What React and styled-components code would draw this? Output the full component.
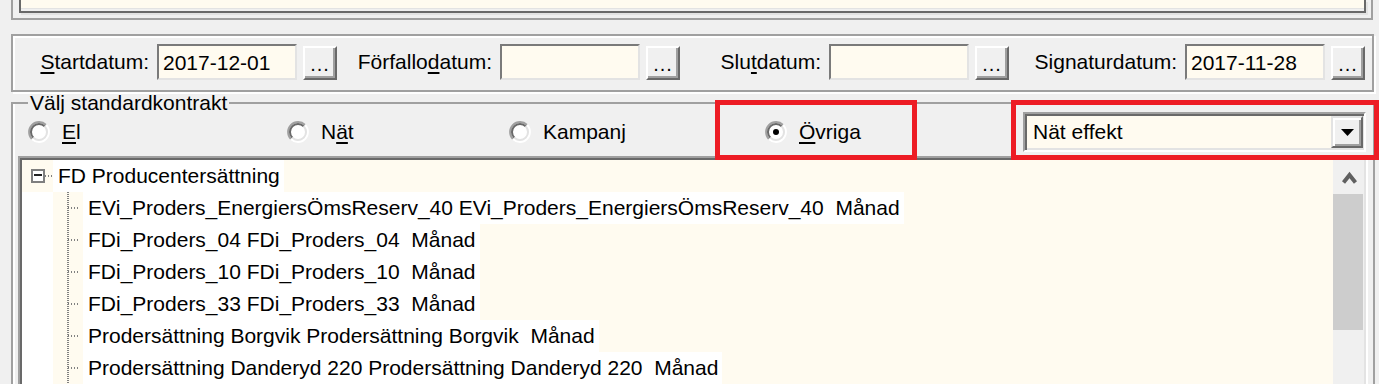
import React from 'react';
import styled, { createGlobalStyle } from 'styled-components';

const Colors = {
  face: '#f0f0f0',
  cream: '#fffbf0',
  shadow: '#a0a0a0',
  dark: '#696969',
  light: '#e3e3e3',
  thumb: '#cdcdcd',
  red: '#ed1c24',
};

const GlobalStyle = createGlobalStyle`
  html, body {
    margin: 0;
    padding: 0;
    background: ${Colors.face};
  }
  body {
    font-family: "Liberation Sans", Arial, sans-serif;
    font-size: 21px;
    color: #000;
  }
  u {
    text-decoration-thickness: 2px;
    text-underline-offset: 3px;
  }
`;

const Page = styled.div`
  position: relative;
  width: 1379px;
  height: 384px;
  overflow: hidden;
  background: ${Colors.face};
`;

// memo field cut off at the top of the window
const TopFrame = styled.div`
  box-sizing: border-box;
  height: 20px;
  margin: 0 6px 0 11px;
  padding: 0 5px 5px 6px;
  border: 2px solid ${Colors.shadow};
  border-top: none;
`;

const Memo = styled.div`
  box-sizing: border-box;
  height: 13px;
  background: ${Colors.cream};
  border: 2px solid ${Colors.dark};
  border-top: none;
  box-shadow: inset 0 -2px 0 ${Colors.face}, inset 0 -3px 0 ${Colors.light}, 2px 2px 0 ${Colors.light};
`;

const DateGroup = styled.div`
  box-sizing: border-box;
  height: 58px;
  margin: 14px 5px 0 11px;
  padding-bottom: 2px;
  display: flex;
  align-items: center;
  border: 2px solid ${Colors.shadow};
  box-shadow: inset 2px 2px 0 #fff, 2px 2px 0 #fff;
`;

const Field = styled.div`
  display: flex;
  align-items: center;
`;

const FieldLabel = styled.label`
  width: ${p => p.$width}px;
  margin-right: 8px;
  text-align: right;
  white-space: nowrap;
  line-height: 30px;
`;

const DateInput = styled.div`
  box-sizing: border-box;
  width: 140px;
  height: 36px;
  padding-left: 4px;
  border: 2px solid;
  border-color: #7a7a7a ${Colors.light} ${Colors.light} #7a7a7a;
  background: ${Colors.cream};
  line-height: 34px;
  font-size: 21px;
`;

const DotsButton = styled.div`
  box-sizing: border-box;
  width: 34px;
  height: 34px;
  margin-left: 6px;
  align-self: flex-end;
  display: flex;
  justify-content: center;
  align-items: flex-end;
  padding-bottom: 5px;
  border: 2px solid;
  border-color: #fff ${Colors.dark} ${Colors.dark} #fff;
  box-shadow: inset -2px -2px 0 ${Colors.shadow};
  background: ${Colors.face};
  font-size: 20px;
  line-height: 18px;
  letter-spacing: 1px;
`;

const ContractGroup = styled.fieldset`
  margin: 1px 4px 0 11px;
  padding: 0;
  min-width: 0;
  height: 320px;
  border: 2px solid ${Colors.shadow};
  border-bottom: none;
  box-shadow: inset 2px 0 0 #fff;
`;

const Legend = styled.legend`
  margin-left: 15px;
  padding: 0 2px;
  line-height: 20px;
`;

const RadioRow = styled.div`
  height: 40px;
  margin-top: -1px;
  padding-left: 15px;
  display: flex;
  align-items: center;
`;

const RadioItem = styled.div`
  width: ${p => p.$width}px;
  display: flex;
  align-items: center;
  gap: 12px;
  flex-shrink: 0;
`;

const Combo = styled.div`
  box-sizing: border-box;
  width: 343px;
  height: 40px;
  margin-left: 8px;
  padding: 0 1px 0 6px;
  display: flex;
  align-items: center;
  border: 2px solid;
  border-color: ${Colors.shadow} #fff #fff ${Colors.shadow};
  box-shadow: inset 2px 2px 0 ${Colors.dark}, inset -2px -2px 0 ${Colors.light};
  background: ${Colors.cream};
  flex-shrink: 0;
`;

const ComboText = styled.span`
  padding-left: 2px;
  flex: 1;
`;

const DropButton = styled.div`
  box-sizing: border-box;
  width: 32px;
  height: 32px;
  display: flex;
  align-items: center;
  justify-content: center;
  border: 2px solid;
  border-color: ${Colors.light} ${Colors.dark} ${Colors.dark} ${Colors.light};
  box-shadow: inset 2px 2px 0 #fff, inset -2px -2px 0 ${Colors.shadow};
  background: ${Colors.face};
`;

const TreeFrame = styled.div`
  margin: 4px 5px 0 5px;
  height: 240px;
  border: 2px solid;
  border-color: ${Colors.shadow} #fff #fff ${Colors.shadow};
`;

const TreeInner = styled.div`
  box-sizing: border-box;
  height: 100%;
  display: flex;
  border: 2px solid;
  border-color: ${Colors.dark} ${Colors.light} ${Colors.light} ${Colors.dark};
  background: ${Colors.cream};
`;

const TreeBody = styled.div`
  flex: 1;
  min-width: 0;
`;

const Row = styled.div`
  height: 32px;
  display: flex;
  align-items: stretch;
`;

const Gutter = styled.div`
  width: 31px;
  flex-shrink: 0;
  display: flex;
  align-items: center;
  background: ${p => (p.$white ? '#fff' : Colors.cream)};
`;

const ExpandBox = styled.span`
  position: relative;
  box-sizing: border-box;
  width: 14px;
  height: 14px;
  margin-left: 9px;
  border: 2px solid #7f7f7f;
  background: #fff;
  &::after {
    content: '';
    position: absolute;
    left: 1px;
    right: 1px;
    top: 3px;
    height: 2px;
    background: #222;
  }
`;

const HDots = styled.span`
  width: ${p => p.$width}px;
  height: 2px;
  background: repeating-linear-gradient(to right, #808080 0 1px, transparent 1px 3px);
`;

const Branch = styled.div`
  width: 30px;
  flex-shrink: 0;
  display: flex;
  align-items: center;
  padding-left: 15px;
  box-sizing: border-box;
  background:
    repeating-linear-gradient(to bottom, #808080 0 1px, transparent 1px 2px) 14px 0 / 2px 100% no-repeat,
    ${Colors.cream};
`;

const NodeLabel = styled.span`
  padding: 0 4px 0 5px;
  background: #fff;
  white-space: pre;
  line-height: 32px;
`;

const ScrollBar = styled.div`
  width: 31px;
  flex-shrink: 0;
  display: flex;
  flex-direction: column;
  background: ${Colors.face};
`;

const ScrollArrow = styled.div`
  height: 34px;
  display: flex;
  align-items: center;
  justify-content: center;
  padding-left: 1px;
`;

const ScrollThumb = styled.div`
  height: 136px;
  margin-right: 1px;
  background: ${Colors.thumb};
`;

const Highlight = styled.div`
  position: absolute;
  box-sizing: border-box;
  top: 100px;
  left: ${p => p.$left}px;
  width: ${p => p.$width}px;
  height: 60px;
  border: 5px solid ${Colors.red};
  pointer-events: none;
`;

function RadioCircle({ checked }) {
  return (
    <svg width="22" height="22" viewBox="0 0 22 22">
      <circle cx="11" cy="11" r="8" fill="#fff" />
      <path d="M3.93 18.07 A10 10 0 0 1 18.07 3.93" fill="none" stroke={Colors.shadow} strokeWidth="2" />
      <path d="M18.07 3.93 A10 10 0 0 1 3.93 18.07" fill="none" stroke="#fff" strokeWidth="2" />
      <path d="M5.34 16.66 A8 8 0 0 1 16.66 5.34" fill="none" stroke={Colors.dark} strokeWidth="2" />
      <path d="M16.66 5.34 A8 8 0 0 1 5.34 16.66" fill="none" stroke={Colors.light} strokeWidth="2" />
      {checked && <circle cx="11" cy="11" r="3" fill="#000" />}
    </svg>
  );
}

const dateFields = [
  { label: <><u>S</u>tartdatum:</>, width: 136, value: '2017-12-01' },
  { label: <>Förfallo<u>d</u>atum:</>, width: 155, value: '' },
  { label: <>Slu<u>t</u>datum:</>, width: 141, value: '' },
  { label: <>Signaturdatum:</>, width: 168, value: '2017-11-28' },
];

const radios = [
  { label: <><u>E</u>l</>, width: 259 },
  { label: <>N<u>ä</u>t</>, width: 222 },
  { label: <>Kampanj</>, width: 256 },
  { label: <><u>Ö</u>vriga</>, width: 250, checked: true },
];

const children = [
  'EVi_Proders_EnergiersÖmsReserv_40 EVi_Proders_EnergiersÖmsReserv_40  Månad',
  'FDi_Proders_04 FDi_Proders_04  Månad',
  'FDi_Proders_10 FDi_Proders_10  Månad',
  'FDi_Proders_33 FDi_Proders_33  Månad',
  'Prodersättning Borgvik Prodersättning Borgvik  Månad',
  'Prodersättning Danderyd 220 Prodersättning Danderyd 220  Månad',
];

export default function App() {
  return (
    <Page>
      <GlobalStyle />
      <TopFrame>
        <Memo />
      </TopFrame>

      <DateGroup>
        {dateFields.map((f, i) => (
          <Field key={i}>
            <FieldLabel $width={f.width}>{f.label}</FieldLabel>
            <DateInput>{f.value}</DateInput>
            <DotsButton>...</DotsButton>
          </Field>
        ))}
      </DateGroup>

      <ContractGroup>
        <Legend>Välj standardkontrakt</Legend>
        <RadioRow>
          {radios.map((r, i) => (
            <RadioItem key={i} $width={r.width}>
              <RadioCircle checked={r.checked} />
              <span>{r.label}</span>
            </RadioItem>
          ))}
          <Combo>
            <ComboText>Nät effekt</ComboText>
            <DropButton>
              <svg width="13" height="7" viewBox="0 0 13 7">
                <polygon points="0,0 13,0 6.5,7" fill="#000" />
              </svg>
            </DropButton>
          </Combo>
        </RadioRow>

        <TreeFrame>
          <TreeInner>
            <TreeBody>
              <Row>
                <Gutter>
                  <ExpandBox />
                  <HDots $width={8} />
                </Gutter>
                <NodeLabel>FD Producentersättning</NodeLabel>
              </Row>
              {children.map(text => (
                <Row key={text}>
                  <Gutter $white />
                  <Branch>
                    <HDots $width={12} />
                  </Branch>
                  <NodeLabel>{text}</NodeLabel>
                </Row>
              ))}
              <Row>
                <Gutter $white />
                <Branch />
              </Row>
            </TreeBody>
            <ScrollBar>
              <ScrollArrow>
                <svg width="15" height="13" viewBox="0 0 15 13">
                  <polyline points="1.5,11.5 7.5,4 13.5,11.5" fill="none" stroke="#606060" strokeWidth="4" strokeLinejoin="miter" />
                </svg>
              </ScrollArrow>
              <ScrollThumb />
            </ScrollBar>
          </TreeInner>
        </TreeFrame>
      </ContractGroup>

      <Highlight $left={715} $width={202} />
      <Highlight $left={1011} $width={368} />
    </Page>
  );
}
